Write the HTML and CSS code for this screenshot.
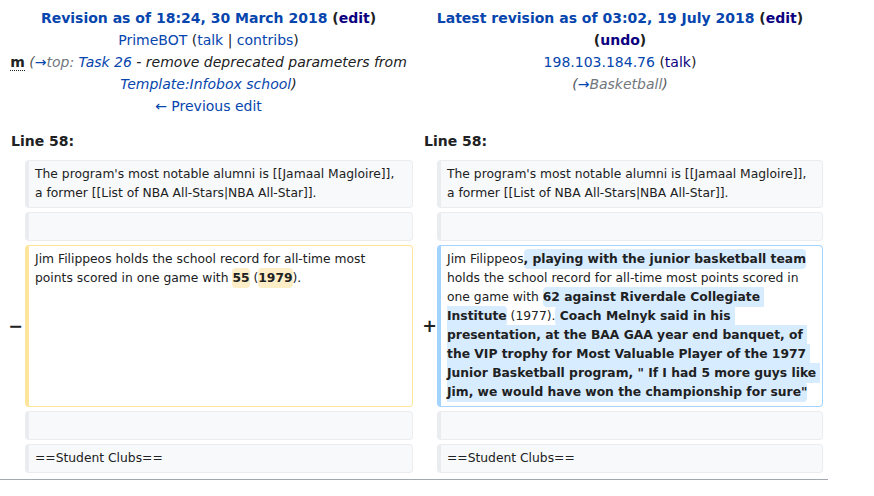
FILE: index.html
```html
<!DOCTYPE html>
<html lang="en">
<head>
<meta charset="utf-8">
<title>Diff</title>
<link rel="stylesheet" href="styles.css">
</head>
<body>
<div class="diff">
  <div class="title">
    <div class="heading"><a href="#" class="link">Revision as of 18:24, 30 March 2018</a> <span class="editlink">(<a href="#" class="visited">edit</a>)</span></div>
    <div><a href="#" class="link">PrimeBOT</a> (<a href="#" class="link">talk</a> | <a href="#" class="link">contribs</a>)</div>
    <div><abbr class="minor" title="This is a minor edit">m</abbr> <span class="comment"><span class="paren">(</span><a href="#" class="link">→</a><span class="auto">top:</span> <a href="#" class="link">Task 26</a> - remove deprecated parameters from <a href="#" class="link">Template:Infobox school</a>)</span></div>
    <div><a href="#" class="link">← Previous edit</a></div>
  </div>
  <div class="title">
    <div class="heading"><a href="#" class="link">Latest revision as of 03:02, 19 July 2018</a> <span class="editlink">(<a href="#" class="visited">edit</a>)</span> <span class="editlink">(<a href="#" class="visited">undo</a>)</span></div>
    <div><a href="#" class="link">198.103.184.76</a> (<a href="#" class="visited">talk</a>)</div>
    <div><span class="comment"><span class="paren">(</span><a href="#" class="link">→</a><span class="auto">Basketball</span><span class="paren">)</span></span></div>
  </div>

  <div class="lineno">Line 58:</div>
  <div class="lineno">Line 58:</div>

  <div class="marker"></div>
  <div class="line context">The program's most notable alumni is [[Jamaal Magloire]], a former [[List of NBA All-Stars|NBA All-Star]].</div>
  <div class="marker"></div>
  <div class="line context">The program's most notable alumni is [[Jamaal Magloire]], a former [[List of NBA All-Stars|NBA All-Star]].</div>

  <div class="marker"></div>
  <div class="line context"><br></div>
  <div class="marker"></div>
  <div class="line context"><br></div>

  <div class="marker minus">−</div>
  <div class="line deleted">Jim Filippeos holds the school record for all-time most points scored in one game with <del class="change">55</del> (<del class="change">1979</del>).</div>
  <div class="marker plus">+</div>
  <div class="line added">Jim Filippeos<ins class="change">, playing with the junior basketball team</ins> holds the school record for all-time most points scored in one game with <ins class="change">62 against Riverdale Collegiate Institute</ins> (1977).<ins class="change"> Coach Melnyk said in his presentation, at the BAA GAA year end banquet, of the VIP trophy for Most Valuable Player of the 1977 Junior Basketball program, " If I had 5 more guys like Jim, we would have won the championship for sure"</ins></div>

  <div class="marker"></div>
  <div class="line context"><br></div>
  <div class="marker"></div>
  <div class="line context"><br></div>

  <div class="marker"></div>
  <div class="line context">==Student Clubs==</div>
  <div class="marker"></div>
  <div class="line context">==Student Clubs==</div>
</div>
</body>
</html>
```
FILE: styles.css
```css
html, body {
  margin: 0;
  padding: 0;
  background: #ffffff;
}

body {
  font-family: "DejaVu Sans", sans-serif;
  font-size: 14px;
  line-height: 22px;
  color: #202122;
}

a {
  text-decoration: none;
}

.link {
  color: #0645ad;
}

.visited {
  color: #0b0080;
}

.diff {
  width: 828px;
  box-sizing: border-box;
  display: grid;
  grid-template-columns: 17px 388px 16px 386px;
  column-gap: 4px;
  row-gap: 4px;
  padding: 4px 5px 6px 4px;
  border-bottom: 1px solid #a2a9b1;
}

.title {
  grid-column: span 2;
  text-align: center;
  padding: 3px 0 4px;
}

.heading {
  font-weight: bold;
}

.editlink {
  color: #202122;
}

.minor {
  font-weight: bold;
  text-decoration: none;
  border-bottom: 1px dotted #202122;
  cursor: help;
}

.comment {
  font-style: italic;
  color: #202122;
}

.paren {
  color: #54595d;
}

.auto {
  color: #72777d;
}

.lineno {
  grid-column: span 2;
  font-weight: bold;
  padding: 5px 7px 4px;
}

.marker {
  display: flex;
  align-items: center;
  justify-content: flex-end;
  font-weight: bold;
  font-size: 17.5px;
  line-height: 21px;
  color: #202122;
}

.minus {
  margin-right: -2px;
}

.plus {
  margin-right: -4px;
}

.line {
  font-size: 12.32px;
  line-height: 19px;
  color: #202122;
  white-space: pre-wrap;
  word-wrap: break-word;
  border-style: solid;
  border-width: 1px 1px 1px 4px;
  border-radius: 4px;
  padding: 4px 9px 4px 6px;
}

.context {
  background: #f8f9fa;
  border-color: #eaecf0;
}

.deleted {
  background: #ffffff;
  border-color: #ffe49c;
}

.added {
  background: #ffffff;
  border-color: #a3d3ff;
  padding-right: 4px;
}

.change {
  font-weight: bold;
  text-decoration: none;
  border-radius: 4px;
  padding: 3px 0;
}

.deleted .change {
  background: #feeec8;
}

.added .change {
  background: #d8ecff;
}
```
